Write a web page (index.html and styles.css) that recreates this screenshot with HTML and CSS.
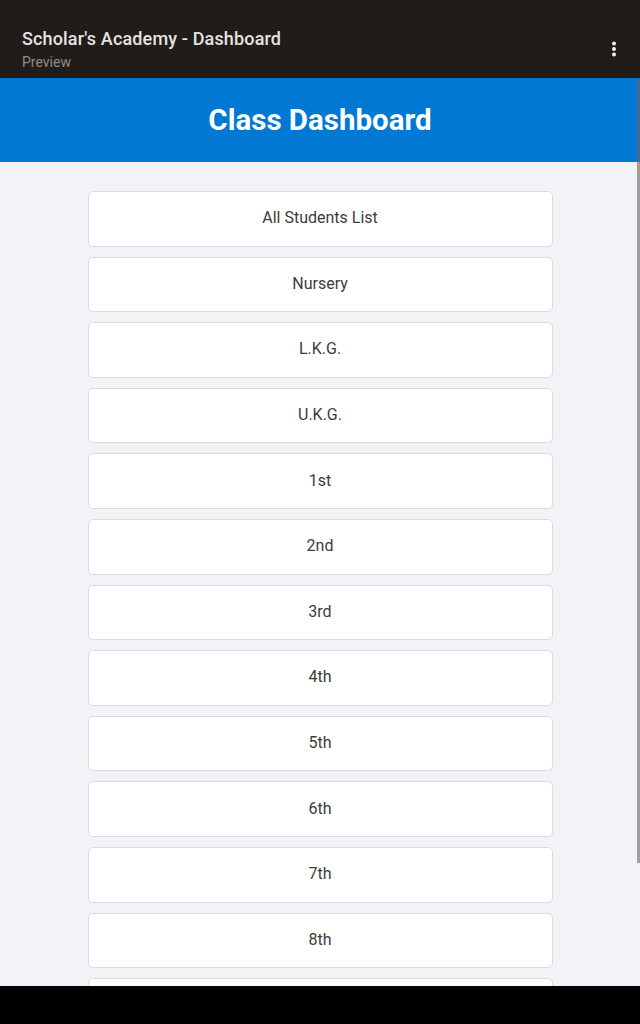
FILE: index.html
```html
<!DOCTYPE html>
<html>
<head>
<meta charset="utf-8">
<link rel="stylesheet" href="styles.css">
</head>
<body>
<div class="appbar">
  <div class="appbar-titles">
    <div class="appbar-title">Scholar's Academy - Dashboard</div>
    <div class="appbar-sub">Preview</div>
  </div>
  <svg class="menu" width="6" height="16" viewBox="0 0 6 16"><circle cx="3" cy="2.5" r="2" fill="#eee"/><circle cx="3" cy="8" r="2" fill="#eee"/><circle cx="3" cy="13.5" r="2" fill="#eee"/></svg>
</div>
<div class="webview">
  <div class="header">Class Dashboard</div>
  <div class="list">
    <div class="item">All Students List</div>
    <div class="item">Nursery</div>
    <div class="item">L.K.G.</div>
    <div class="item">U.K.G.</div>
    <div class="item">1st</div>
    <div class="item">2nd</div>
    <div class="item">3rd</div>
    <div class="item">4th</div>
    <div class="item">5th</div>
    <div class="item">6th</div>
    <div class="item">7th</div>
    <div class="item">8th</div>
    <div class="item">9th</div>
  </div>
  <div class="scrollbar"></div>
</div>
<div class="navbar"></div>
</body>
</html>
```
FILE: styles.css
```css
html, body { margin: 0; padding: 0; }
body {
  width: 640px; height: 1024px; overflow: hidden;
  font-family: Roboto, "Liberation Sans", sans-serif;
  background: #000;
  display: flex; flex-direction: column;
}
.appbar {
  height: 78px; flex: none;
  background: #201c19;
  display: flex; align-items: center; justify-content: space-between;
  padding: 0 23px 0 22px;
  box-sizing: border-box;
}
.appbar-titles { padding-top: 20px; }
.appbar-title { color: #e6e3e0; font-size: 18px; font-weight: 500; line-height: 24px; letter-spacing: 0.15px; }
.appbar-sub { color: #908c88; font-size: 14px; line-height: 20px; margin-top: 1px; }
.menu { margin-top: 20px; }
.webview {
  height: 908px; flex: none; position: relative; overflow: hidden;
  background: #f3f3f7;
}
.header {
  height: 84px; background: #0078d4; color: #fff;
  font-size: 29.5px; font-weight: 700;
  display: flex; align-items: center; justify-content: center;
}
.list {
  width: 465px; margin: 29px auto 0;
  display: flex; flex-direction: column; gap: 10px;
}
.item {
  height: 55.6px; box-sizing: border-box;
  background: #fff; border: 1px solid #dcdce0; border-radius: 5px;
  display: flex; align-items: center; justify-content: center;
  font-size: 16px; color: #3c3c3c; padding-bottom: 2px;
}
.scrollbar {
  position: absolute; right: 0; top: 0; width: 3px; height: 785px;
  background: rgba(110, 95, 95, 0.6);
}
.navbar { flex: 1; background: #000; }
```
